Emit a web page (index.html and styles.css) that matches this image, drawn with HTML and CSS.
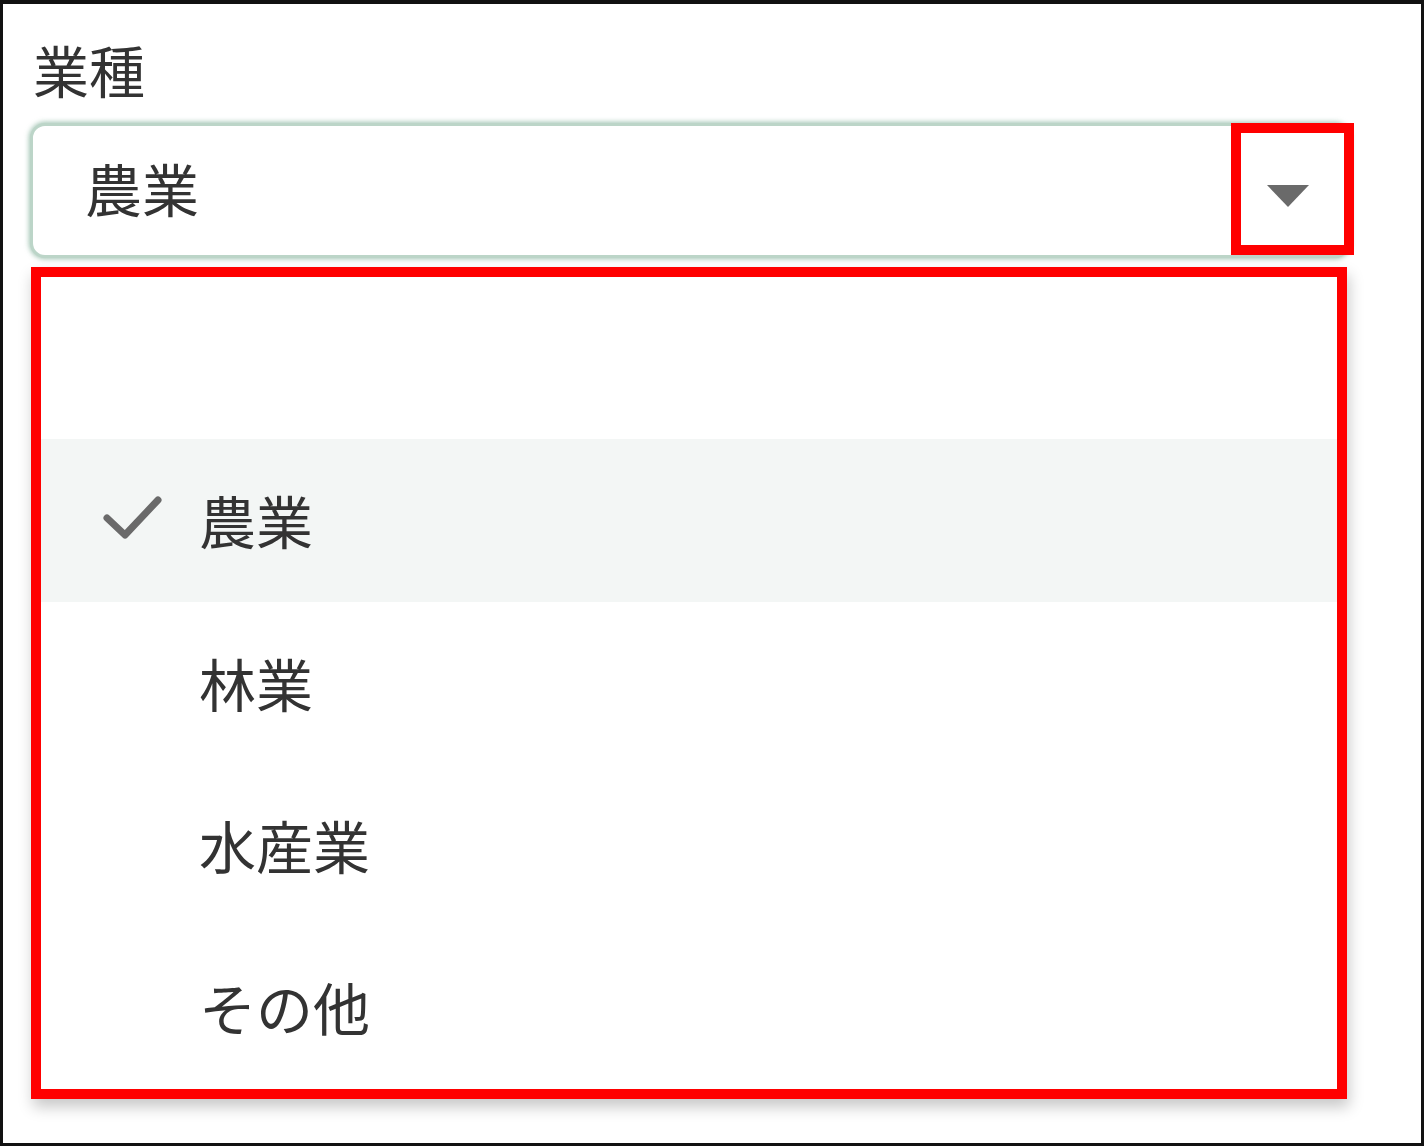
FILE: index.html
```html
<!DOCTYPE html>
<html lang="ja">
<head>
    <meta charset="UTF-8">
    <meta name="viewport" content="width=device-width, initial-scale=1.0">
    <title>業種</title>
    <link rel="stylesheet" href="styles.css">
</head>
<body>

    <div class="frame">
        <div class="fieldWrap">
            <div class="fieldLabel">業種</div>

            <div class="selectBox">
                <span class="selectValue">農業</span>
                <span class="arrowBox">
                    <svg class="arrow" width="44" height="24" viewBox="0 0 44 24">
                        <path d="M1 1 L43 1 L22 23 Z" fill="#6a6a6a"/>
                    </svg>
                </span>
                <span class="markArrow"></span>
            </div>

            <div class="menu">
                <div class="menuItem"></div>
                <div class="menuItem selected">
                    <svg class="check" width="62" height="46" viewBox="0 0 62 46">
                        <path d="M6 24 L24 41 L57 6" fill="none" stroke="#6a6a6a" stroke-width="7" stroke-linecap="round" stroke-linejoin="round"/>
                    </svg>
                    <span>農業</span>
                </div>
                <div class="menuItem"><span>林業</span></div>
                <div class="menuItem"><span>水産業</span></div>
                <div class="menuItem"><span>その他</span></div>
            </div>
        </div>
    </div>

</body>
</html>
```

FILE: styles.css
```css
body{
    margin: 0;
    background-color: #fff;
    font-family: "Noto Sans CJK JP", "Noto Sans", sans-serif;
    color: #333;
}

.frame{
    width: 1424px;
    height: 1146px;
    box-sizing: border-box;
    border: 3px solid #111;
    border-top-width: 4px;
}

.fieldWrap{
    padding-left: 27px;
    padding-top: 30px;
}

.fieldLabel{
    font-size: 56px;
    line-height: 70px;
    height: 70px;
    padding-left: 3px;
    margin-bottom: 19px;
}

.selectBox{
    position: relative;
    width: 1320px;
    height: 135px;
    box-sizing: border-box;
    border: 3px solid #bcd5c8;
    border-radius: 15px;
    box-shadow: 0 0 5px 1px rgba(110, 165, 138, 0.65);
    display: flex;
    align-items: center;
    justify-content: space-between;
    padding-left: 52px;
    background-color: #fff;
}

.selectValue{
    font-size: 57px;
    line-height: 1;
    margin-top: -6px;
}

.arrowBox{
    width: 120px;
    display: flex;
    justify-content: center;
    align-items: center;
}

.arrow{
    display: block;
    margin-left: 2px;
    margin-top: 10px;
}

/* red annotation round the arrow */
.markArrow{
    position: absolute;
    left: 1198px;
    top: -3px;
    width: 123px;
    height: 132px;
    box-sizing: border-box;
    border: 10px solid #ff0000;
}

.menu{
    width: 1316px;
    height: 832px;
    box-sizing: border-box;
    margin-top: 9px;
    margin-left: 1px;
    border: 10px solid #ff0000;
    background-color: #fff;
    box-shadow: 2px 8px 14px rgba(0, 0, 0, 0.22);
    display: flex;
    flex-direction: column;
}

.menuItem{
    flex: 1;
    display: flex;
    align-items: center;
    padding-left: 158px;
    font-size: 57px;
    position: relative;
}

.menuItem span{
    line-height: 1;
    margin-top: -2px;
}

.selected{
    background-color: #f3f6f5;
}

.check{
    position: absolute;
    left: 60px;
    top: 55px;
}
```
